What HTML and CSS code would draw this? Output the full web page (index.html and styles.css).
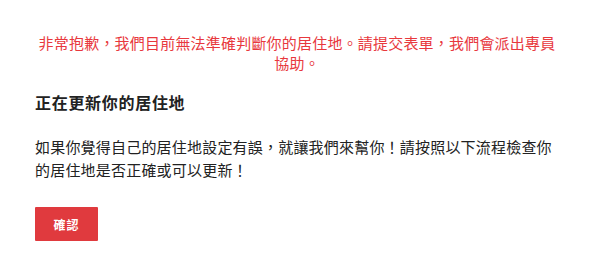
FILE: index.html
```html
<!DOCTYPE html>
<html lang="zh-Hant">
	<head>
		<meta charset="utf-8">
		<title>更新居住地</title>
		<link rel="stylesheet" href="styles.css">
	</head>
	<body>
		<div class="page">
			<p class="notice">非常抱歉，我們目前無法準確判斷你的居住地。請提交表單，我們會派出專員<br>協助。</p>
			<h2 class="title">正在更新你的居住地</h2>
			<p class="desc">如果你覺得自己的居住地設定有誤，就讓我們來幫你！請按照以下流程檢查你的居住地是否正確或可以更新！</p>
			<button class="btn-confirm" type="button">確認</button>
		</div>
	</body>
</html>
```

FILE: styles.css
```css
body {
	margin: 0;
	background: #fff;
	font-family: "Noto Sans CJK TC", "Noto Sans", sans-serif;
	color: #222;
}
.page {
	padding: 33px 35px 0;
}
.notice {
	margin: 0 -20px;
	padding-right: 6px;
	text-align: center;
	color: #e8383d;
	font-size: 15px;
	line-height: 20px;
	letter-spacing: 0.2px;
}
.title {
	margin: 17px 0 0;
	font-size: 16px;
	line-height: 24px;
	font-weight: bold;
	letter-spacing: 0.7px;
}
.desc {
	margin: 21px 0 0;
	font-size: 15px;
	line-height: 23px;
	letter-spacing: 0.2px;
}
.btn-confirm {
	display: block;
	margin-top: 26px;
	width: 63px;
	height: 34px;
	border: 0;
	border-radius: 1px;
	background: #e03a3e;
	color: #fff;
	font-family: inherit;
	font-size: 12px;
	font-weight: bold;
	letter-spacing: 1px;
	padding: 0;
}
```
